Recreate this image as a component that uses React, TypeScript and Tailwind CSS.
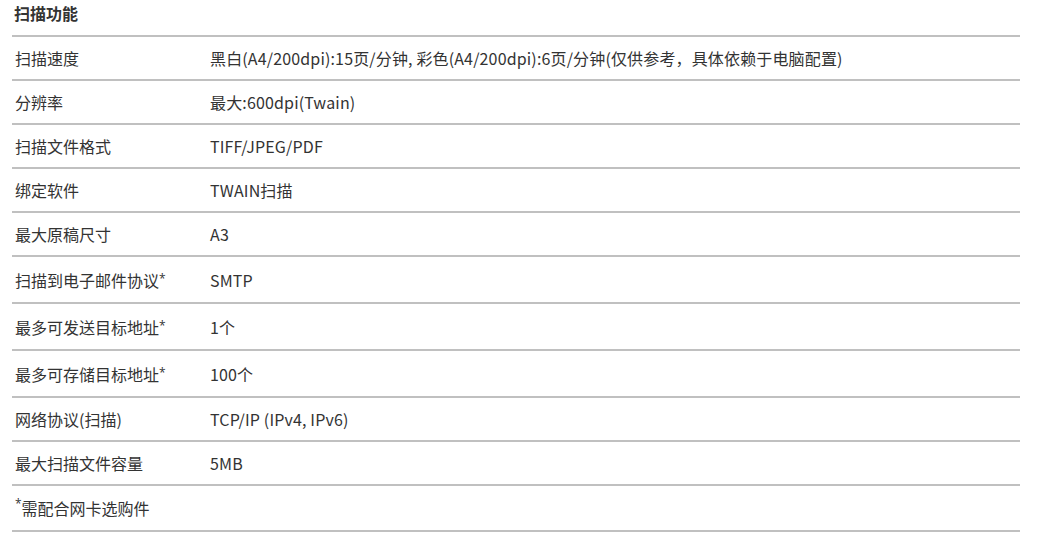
import React from "react";

type Row = { label: string; value: string; star?: boolean };

const rows: Row[] = [
  { label: "扫描速度", value: "黑白(A4/200dpi):15页/分钟, 彩色(A4/200dpi):6页/分钟(仅供参考，具体依赖于电脑配置)" },
  { label: "分辨率", value: "最大:600dpi(Twain)" },
  { label: "扫描文件格式", value: "TIFF/JPEG/PDF" },
  { label: "绑定软件", value: "TWAIN扫描" },
  { label: "最大原稿尺寸", value: "A3" },
  { label: "扫描到电子邮件协议", value: "SMTP", star: true },
  { label: "最多可发送目标地址", value: "1个", star: true },
  { label: "最多可存储目标地址", value: "100个", star: true },
  { label: "网络协议(扫描)", value: "TCP/IP (IPv4, IPv6)" },
  { label: "最大扫描文件容量", value: "5MB" },
];

function Star() {
  return (
    <sup className="text-[12px] relative -top-[4px] font-['Open_Sans',sans-serif]">*</sup>
  );
}

export default function App() {
  return (
    <div
      className="w-[1060px] h-[535px] bg-white text-[#333] text-[16px] overflow-hidden"
      style={{ fontFamily: '"Noto Sans CJK SC", "Noto Sans", sans-serif' }}
    >
      <div className="ml-[12px] w-[1008px]">
        <div className="h-[37px] border-b-2 border-[#c0c0c0] flex items-center pl-[2px] pb-[9px] font-bold">
          扫描功能
        </div>
        {rows.map((r) => (
          <div
            key={r.label}
            className={
              "grid grid-cols-[196px_1fr] items-center border-b-2 border-[#c0c0c0] " +
              (r.star ? "h-[47px]" : "h-[44px]")
            }
          >
            <div className="pl-[3px] whitespace-nowrap">
              {r.label}
              {r.star && <Star />}
            </div>
            <div className="pl-[2px] whitespace-nowrap tracking-[0.15px]">{r.value}</div>
          </div>
        ))}
        <div className="h-[46px] flex items-center border-b-2 border-[#c0c0c0] pl-[3px]">
          <Star />
          需配合网卡选购件
        </div>
      </div>
    </div>
  );
}
